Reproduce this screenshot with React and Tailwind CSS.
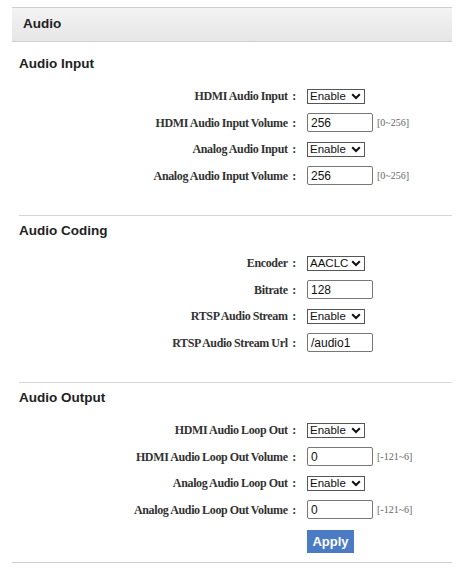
import React from 'react';

// Dropdown drawn as a box with its value and a chevron
const SelectBox = ({ value }) => (
  <div className="flex h-[15px] w-[58px] items-center justify-between border border-[#555] bg-white pl-[2px] pr-[3px] text-[11.5px] leading-none text-[#111] font-['Liberation_Sans',Arial,sans-serif]">
    <span>{value}</span>
    <svg width="10" height="7" viewBox="0 0 10 7" className="shrink-0">
      <path d="M1.2 1.2 L5 5 L8.8 1.2" fill="none" stroke="#111" strokeWidth="2" />
    </svg>
  </div>
);

const TextBox = ({ value }) => (
  <input
    defaultValue={value}
    className="h-[19px] w-[66px] rounded-[2px] border border-[#777] bg-white px-[3px] text-[12px] text-[#111] outline-none font-['Liberation_Sans',Arial,sans-serif]"
  />
);

const Row = ({ label, children, range }) => (
  <div className="flex h-[26.5px] items-center">
    <div className="w-[296px] text-right text-[12px] font-bold text-[#333] tracking-[-0.35px] [word-spacing:-0.3px] font-['Liberation_Serif',serif] whitespace-nowrap">
      {label}&nbsp;&nbsp;:
    </div>
    <div className="ml-[11px] flex items-center">
      {children}
      {range && (
        <span className="ml-[4px] text-[10px] text-[#666] font-['Liberation_Serif',serif]">{range}</span>
      )}
    </div>
  </div>
);

const Heading = ({ children, className = '' }) => (
  <h2 className={`pl-[19px] text-[13.5px] leading-[18px] font-bold text-[#222] font-['Liberation_Sans',Arial,sans-serif] ${className}`}>
    {children}
  </h2>
);

const Divider = () => <div className="ml-[19px] mr-[5px] h-px bg-[#d6d6d6]" />;

export default function App() {
  return (
    <div className="min-h-[572px] bg-white pt-[7px] font-['Liberation_Sans',Arial,sans-serif]">
      {/* Page header */}
      <div className="ml-[12px] mr-[5px] h-[35px] border-y border-[#cfcfcf] bg-gradient-to-b from-[#f3f3f3] to-[#e6e6e6] pl-[11px] flex items-center">
        <span className="text-[13.5px] font-bold text-[#222]">Audio</span>
      </div>

      {/* Audio Input */}
      <Heading className="mt-[13px]">Audio Input</Heading>
      <div className="mt-[10px]">
        <Row label="HDMI Audio Input"><SelectBox value="Enable" /></Row>
        <Row label="HDMI Audio Input Volume" range="[0~256]"><TextBox value="256" /></Row>
        <Row label="Analog Audio Input"><SelectBox value="Enable" /></Row>
        <Row label="Analog Audio Input Volume" range="[0~256]"><TextBox value="256" /></Row>
      </div>
      <div className="mt-[26px]"><Divider /></div>

      {/* Audio Coding */}
      <Heading className="mt-[6px]">Audio Coding</Heading>
      <div className="mt-[10px]">
        <Row label="Encoder"><SelectBox value="AACLC" /></Row>
        <Row label="Bitrate"><TextBox value="128" /></Row>
        <Row label="RTSP Audio Stream"><SelectBox value="Enable" /></Row>
        <Row label="RTSP Audio Stream Url"><TextBox value="/audio1" /></Row>
      </div>
      <div className="mt-[26px]"><Divider /></div>

      {/* Audio Output */}
      <Heading className="mt-[6px]">Audio Output</Heading>
      <div className="mt-[10px]">
        <Row label="HDMI Audio Loop Out"><SelectBox value="Enable" /></Row>
        <Row label="HDMI Audio Loop Out Volume" range="[-121~6]"><TextBox value="0" /></Row>
        <Row label="Analog Audio Loop Out"><SelectBox value="Enable" /></Row>
        <Row label="Analog Audio Loop Out Volume" range="[-121~6]"><TextBox value="0" /></Row>
      </div>
      <div className="mt-[6px] pl-[307px]">
        <button className="h-[23px] w-[47px] bg-[#4a7bc4] text-[13px] font-bold text-white">Apply</button>
      </div>
      <div className="mt-[9px] ml-[12px] mr-[5px] h-px bg-[#cfcfcf]" />
    </div>
  );
}
